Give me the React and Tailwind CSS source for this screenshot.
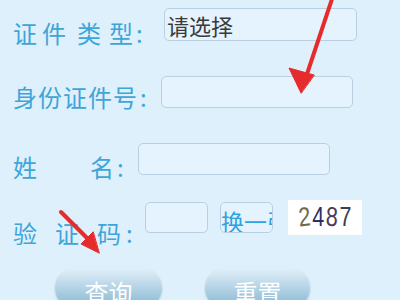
import React from 'react';

const font = { fontFamily: '"Noto Sans CJK SC", "Noto Sans", sans-serif' };

// label characters laid out with hand-measured gaps
const Label = ({ chars, gaps, className = '' }) => (
  <div className={`flex text-[24px] leading-none text-[#3ea5d9] ${className}`}>
    {chars.map((c, i) => (
      <span key={i} style={{ marginLeft: gaps[i] }}>{c}</span>
    ))}
  </div>
);

const Box = ({ className = '', children }) => (
  <div className={`border border-[#b9d0e2] rounded-[5px] bg-[#e4f3fd] ${className}`}>{children}</div>
);

const Arrows = () => (
  <svg className="absolute inset-0 pointer-events-none" width="400" height="300" viewBox="0 0 400 300">
    <g fill="#e52b2b" stroke="#e52b2b" strokeLinecap="round">
      <line x1="333" y1="-4" x2="307" y2="74" strokeWidth="4" />
      <polygon points="301,93 289,68 314,75" strokeWidth="1" />
      <line x1="61" y1="212" x2="88" y2="239" strokeWidth="4" />
      <polygon points="99,253 81,244 93,232" strokeWidth="1" />
    </g>
  </svg>
);

export default function App() {
  return (
    <div className="relative w-[400px] h-[300px] overflow-hidden bg-[#def0fb]" style={font}>
      <div className="flex flex-col pl-[13px]">
        {/* 证件类型 */}
        <div className="flex items-start h-[76px] pt-[8px]">
          <Label className="mt-[13px] w-[151px]" chars={['证', '件', '类', '型', ':']} gaps={[0, 5, 11, 8, 3]} />
          <Box className="w-[193px] h-[33px] flex items-center pl-[2px]">
            <span className="text-[22px] text-[#3a3a3a] leading-none">请选择</span>
          </Box>
        </div>
        {/* 身份证件号 */}
        <div className="flex items-start h-[67px]">
          <Label className="mt-[9px] w-[148px]" chars={['身', '份', '证', '件', '号', ':']} gaps={[0, 1, 1, 1, 1, 3]} />
          <Box className="w-[192px] h-[32px]" />
        </div>
        {/* 姓名 */}
        <div className="flex items-start h-[59px]">
          <Label className="mt-[12px] w-[125px]" chars={['姓', '名', ':']} gaps={[0, 53, 3]} />
          <Box className="w-[192px] h-[32px]" />
        </div>
        {/* 验证码 */}
        <div className="flex items-start h-[66px]">
          <Label className="mt-[19px] w-[132px]" chars={['验', '证', '码', ':']} gaps={[0, 18, 18, 5]} />
          <Box className="w-[63px] h-[31px]" />
          <Box className="ml-[12px] w-[53px] h-[31px] overflow-hidden flex items-end">
            <span className="text-[23px] leading-none text-[#2ea1de] whitespace-nowrap -mb-[1px]">换一张</span>
          </Box>
          <div className="ml-[15px] -mt-[2px] w-[74px] h-[35px] bg-white flex items-center justify-center">
            <span className="inline-flex gap-[2px] scale-x-[0.8] text-[27px] leading-none" style={{ fontFamily: '"Liberation Sans", sans-serif' }}>
              <span className="text-[#6b6a4e] -rotate-6">2</span>
              <span className="text-[#2d2f6b]">4</span>
              <span className="text-[#4a3a5e] rotate-3">8</span>
              <span className="text-[#3c3f4c]">7</span>
            </span>
          </div>
        </div>
        {/* 按钮 */}
        <div className="flex items-start">
          <button className="ml-[42px] w-[107px] h-[40px] rounded-full bg-gradient-to-b from-[#e2f0f9] to-[#86b6d1] text-white text-[24px] leading-none pt-[8px] shadow-[0_1px_2px_rgba(80,130,160,0.4)]">查询</button>
          <button className="ml-[43px] w-[105px] h-[40px] rounded-full bg-gradient-to-b from-[#e2f0f9] to-[#86b6d1] text-white text-[24px] leading-none pt-[8px] shadow-[0_1px_2px_rgba(80,130,160,0.4)]">重置</button>
        </div>
      </div>
      <Arrows />
    </div>
  );
}
